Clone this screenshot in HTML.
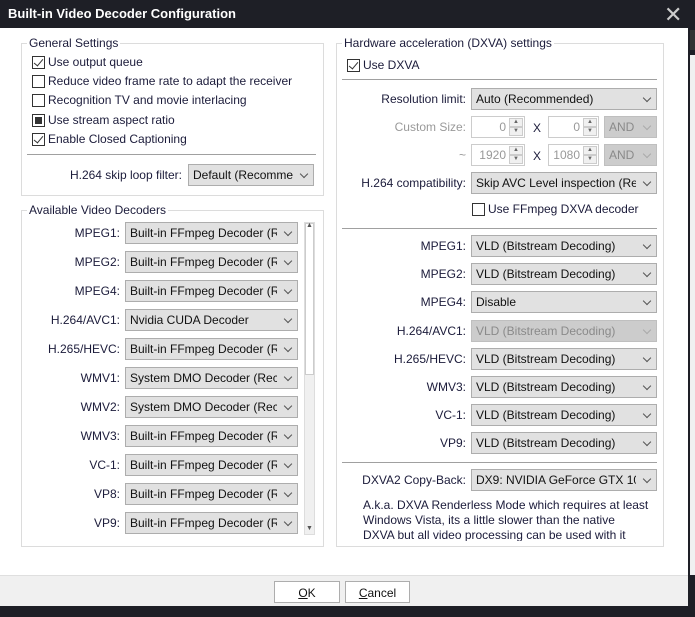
<!DOCTYPE html><html><head><style>
*{box-sizing:border-box}
body{margin:0;width:695px;height:617px;background:#1e1f26;font-family:"Liberation Sans",sans-serif;font-size:12px;color:#1b1b3a;position:relative;overflow:hidden}
.a{position:absolute;white-space:nowrap}
.win{position:absolute;left:0;top:28px;width:688px;height:578px;background:#fff}
.title{left:8px;top:6px;color:#fff;font-weight:bold;font-size:13px}
.gb{position:absolute;border:1px solid #dcdcdc}
.gl{position:absolute;background:#fff;padding:0 2px;color:#1b1b3a}
.cb{position:absolute;width:13px;height:13px;border:1px solid #333;background:#fff}
.cb.c::after{content:"";position:absolute;left:3px;top:0px;width:4px;height:8px;border:solid #333;border-width:0 1.5px 1.5px 0;transform:rotate(40deg)}
.cb.f::after{content:"";position:absolute;left:2px;top:2px;width:7px;height:7px;background:#333}
.combo{position:absolute;height:22px;background:#e1e1e1;border:1px solid #adadad;padding:3px 0 0 4px;overflow:hidden;white-space:nowrap;color:#111}
.combo::after{content:"";position:absolute;right:6px;top:6px;width:5px;height:5px;border:solid #555;border-width:0 1px 1px 0;transform:rotate(45deg);background:#e1e1e1}
.combo .t{display:block;width:calc(100% - 20px);overflow:hidden}
.dis{background:#ccc;border-color:#bfbfbf;color:#8a8a8a}
.dis::after{border-color:#aaa;background:#ccc}
.lbl{position:absolute;text-align:right;white-space:nowrap}
.sep{position:absolute;height:1px;background:#a0a0a0}
.spin{position:absolute;height:22px;border:1px solid #ccc;background:#fff;color:#999;text-align:right;padding:3px 18px 0 0}
.spin i{position:absolute;right:1px;width:14px;height:9px;background:#f0f0f0;border:1px solid #ccc;font-style:normal;font-size:6px;line-height:7px;text-align:center;color:#666}
.btn{position:absolute;height:22px;border:1px solid #adadad;background:#fff;text-align:center;padding-top:4px;color:#111}
</style></head><body>
<div class="a title">Built-in Video Decoder Configuration</div>
<div class="a" style="left:664px;top:2px;color:#ccc;font-size:22px">✕</div>
<div class="a" style="left:690px;top:30px;width:5px;height:20px;background:#333"></div>
<div class="a" style="left:690px;top:55px;width:5px;height:520px;background:#f0f0f0"></div>
<div class="win">
<div class="gb" style="left:21px;top:15px;width:303px;height:153px"></div>
<div class="gl" style="left:27px;top:8px">General Settings</div>
<div class="cb c" style="left:32px;top:28px"></div><div class="a" style="left:48px;top:27px">Use output queue</div>
<div class="cb" style="left:32px;top:47px"></div><div class="a" style="left:48px;top:46px">Reduce video frame rate to adapt the receiver</div>
<div class="cb" style="left:32px;top:66px"></div><div class="a" style="left:48px;top:65px">Recognition TV and movie interlacing</div>
<div class="cb f" style="left:32px;top:86px"></div><div class="a" style="left:48px;top:85px">Use stream aspect ratio</div>
<div class="cb c" style="left:32px;top:105px"></div><div class="a" style="left:48px;top:104px">Enable Closed Captioning</div>
<div class="sep" style="left:27px;top:126px;width:289px"></div>
<div class="lbl" style="left:60px;width:122px;top:140px">H.264 skip loop filter:</div>
<div class="combo" style="left:188px;top:136px;width:126px"><span class="t">Default (Recomme</span></div>

<div class="gb" style="left:21px;top:182px;width:303px;height:337px"></div>
<div class="gl" style="left:27px;top:175px">Available Video Decoders</div>
<div class="a" style="left:304px;top:194px;width:11px;height:313px;background:#f0f0f0;border:1px solid #ddd"></div>
<div class="a" style="left:305px;top:195px;width:9px;height:152px;background:#fff;border:1px solid #ccc"></div>
<div class="a" style="left:306px;top:194px;font-size:7px;color:#555">▲</div>
<div class="a" style="left:306px;top:497px;font-size:7px;color:#555">▼</div>

<div class="lbl" style="left:30px;width:90px;top:198px">MPEG1:</div><div class="combo" style="left:125px;top:194px;width:173px"><span class="t">Built-in FFmpeg Decoder (R</span></div>
<div class="lbl" style="left:30px;width:90px;top:227px">MPEG2:</div><div class="combo" style="left:125px;top:223px;width:173px"><span class="t">Built-in FFmpeg Decoder (R</span></div>
<div class="lbl" style="left:30px;width:90px;top:256px">MPEG4:</div><div class="combo" style="left:125px;top:252px;width:173px"><span class="t">Built-in FFmpeg Decoder (R</span></div>
<div class="lbl" style="left:30px;width:90px;top:285px">H.264/AVC1:</div><div class="combo" style="left:125px;top:281px;width:173px"><span class="t">Nvidia CUDA Decoder</span></div>
<div class="lbl" style="left:30px;width:90px;top:314px">H.265/HEVC:</div><div class="combo" style="left:125px;top:310px;width:173px"><span class="t">Built-in FFmpeg Decoder (R</span></div>
<div class="lbl" style="left:30px;width:90px;top:343px">WMV1:</div><div class="combo" style="left:125px;top:339px;width:173px"><span class="t">System DMO Decoder (Rec</span></div>
<div class="lbl" style="left:30px;width:90px;top:372px">WMV2:</div><div class="combo" style="left:125px;top:368px;width:173px"><span class="t">System DMO Decoder (Rec</span></div>
<div class="lbl" style="left:30px;width:90px;top:401px">WMV3:</div><div class="combo" style="left:125px;top:397px;width:173px"><span class="t">Built-in FFmpeg Decoder (R</span></div>
<div class="lbl" style="left:30px;width:90px;top:430px">VC-1:</div><div class="combo" style="left:125px;top:426px;width:173px"><span class="t">Built-in FFmpeg Decoder (R</span></div>
<div class="lbl" style="left:30px;width:90px;top:459px">VP8:</div><div class="combo" style="left:125px;top:455px;width:173px"><span class="t">Built-in FFmpeg Decoder (R</span></div>
<div class="lbl" style="left:30px;width:90px;top:488px">VP9:</div><div class="combo" style="left:125px;top:484px;width:173px"><span class="t">Built-in FFmpeg Decoder (R</span></div>

<div class="gb" style="left:336px;top:15px;width:328px;height:504px"></div>
<div class="gl" style="left:342px;top:8px">Hardware acceleration (DXVA) settings</div>
<div class="cb c" style="left:347px;top:31px"></div><div class="a" style="left:363px;top:30px">Use DXVA</div>
<div class="sep" style="left:342px;top:51px;width:315px"></div>
<div class="lbl" style="left:340px;width:126px;top:64px">Resolution limit:</div>
<div class="combo" style="left:471px;top:60px;width:186px"><span class="t">Auto (Recommended)</span></div>
<div class="lbl" style="left:340px;width:126px;top:92px;color:#999">Custom Size:</div>
<div class="spin" style="left:471px;top:88px;width:54px">0<i style="top:1px">▲</i><i style="top:10px">▼</i></div>
<div class="a" style="left:533px;top:93px">X</div>
<div class="spin" style="left:548px;top:88px;width:51px">0<i style="top:1px">▲</i><i style="top:10px">▼</i></div>
<div class="combo dis" style="left:604px;top:88px;width:53px"><span class="t">AND</span></div>
<div class="lbl" style="left:340px;width:126px;top:120px;color:#999">~</div>
<div class="spin" style="left:471px;top:116px;width:54px">1920<i style="top:1px">▲</i><i style="top:10px">▼</i></div>
<div class="a" style="left:533px;top:121px">X</div>
<div class="spin" style="left:548px;top:116px;width:51px">1080<i style="top:1px">▲</i><i style="top:10px">▼</i></div>
<div class="combo dis" style="left:604px;top:116px;width:53px"><span class="t">AND</span></div>
<div class="lbl" style="left:340px;width:126px;top:148px">H.264 compatibility:</div>
<div class="combo" style="left:471px;top:144px;width:186px"><span class="t">Skip AVC Level inspection (Re</span></div>
<div class="cb" style="left:472px;top:175px"></div><div class="a" style="left:488px;top:174px">Use FFmpeg DXVA decoder</div>
<div class="sep" style="left:342px;top:200px;width:315px"></div>
<div class="lbl" style="left:340px;width:126px;top:211px">MPEG1:</div><div class="combo" style="left:471px;top:207px;width:186px"><span class="t">VLD (Bitstream Decoding)</span></div>
<div class="lbl" style="left:340px;width:126px;top:239px">MPEG2:</div><div class="combo" style="left:471px;top:235px;width:186px"><span class="t">VLD (Bitstream Decoding)</span></div>
<div class="lbl" style="left:340px;width:126px;top:267px">MPEG4:</div><div class="combo" style="left:471px;top:263px;width:186px"><span class="t">Disable</span></div>
<div class="lbl" style="left:340px;width:126px;top:296px">H.264/AVC1:</div><div class="combo dis" style="left:471px;top:292px;width:186px"><span class="t">VLD (Bitstream Decoding)</span></div>
<div class="lbl" style="left:340px;width:126px;top:324px">H.265/HEVC:</div><div class="combo" style="left:471px;top:320px;width:186px"><span class="t">VLD (Bitstream Decoding)</span></div>
<div class="lbl" style="left:340px;width:126px;top:352px">WMV3:</div><div class="combo" style="left:471px;top:348px;width:186px"><span class="t">VLD (Bitstream Decoding)</span></div>
<div class="lbl" style="left:340px;width:126px;top:380px">VC-1:</div><div class="combo" style="left:471px;top:376px;width:186px"><span class="t">VLD (Bitstream Decoding)</span></div>
<div class="lbl" style="left:340px;width:126px;top:408px">VP9:</div><div class="combo" style="left:471px;top:404px;width:186px"><span class="t">VLD (Bitstream Decoding)</span></div>
<div class="sep" style="left:342px;top:434px;width:315px"></div>
<div class="lbl" style="left:340px;width:126px;top:445px">DXVA2 Copy-Back:</div>
<div class="combo" style="left:471px;top:441px;width:186px"><span class="t">DX9: NVIDIA GeForce GTX 10</span></div>
<div class="a" style="left:363px;top:470px;width:295px;height:43px;overflow:hidden;line-height:15px">A.k.a. DXVA Renderless Mode which requires at least<br>Windows Vista, its a little slower than the native<br>DXVA but all video processing can be used with it</div>

<div class="a" style="left:0;top:547px;width:688px;height:31px;background:#f0f0f0;border-top:1px solid #dfdfdf"></div>
<div class="btn" style="left:274px;top:553px;width:66px"><u>O</u>K</div>
<div class="btn" style="left:345px;top:553px;width:65px"><u>C</u>ancel</div>
</div>
</body></html>
